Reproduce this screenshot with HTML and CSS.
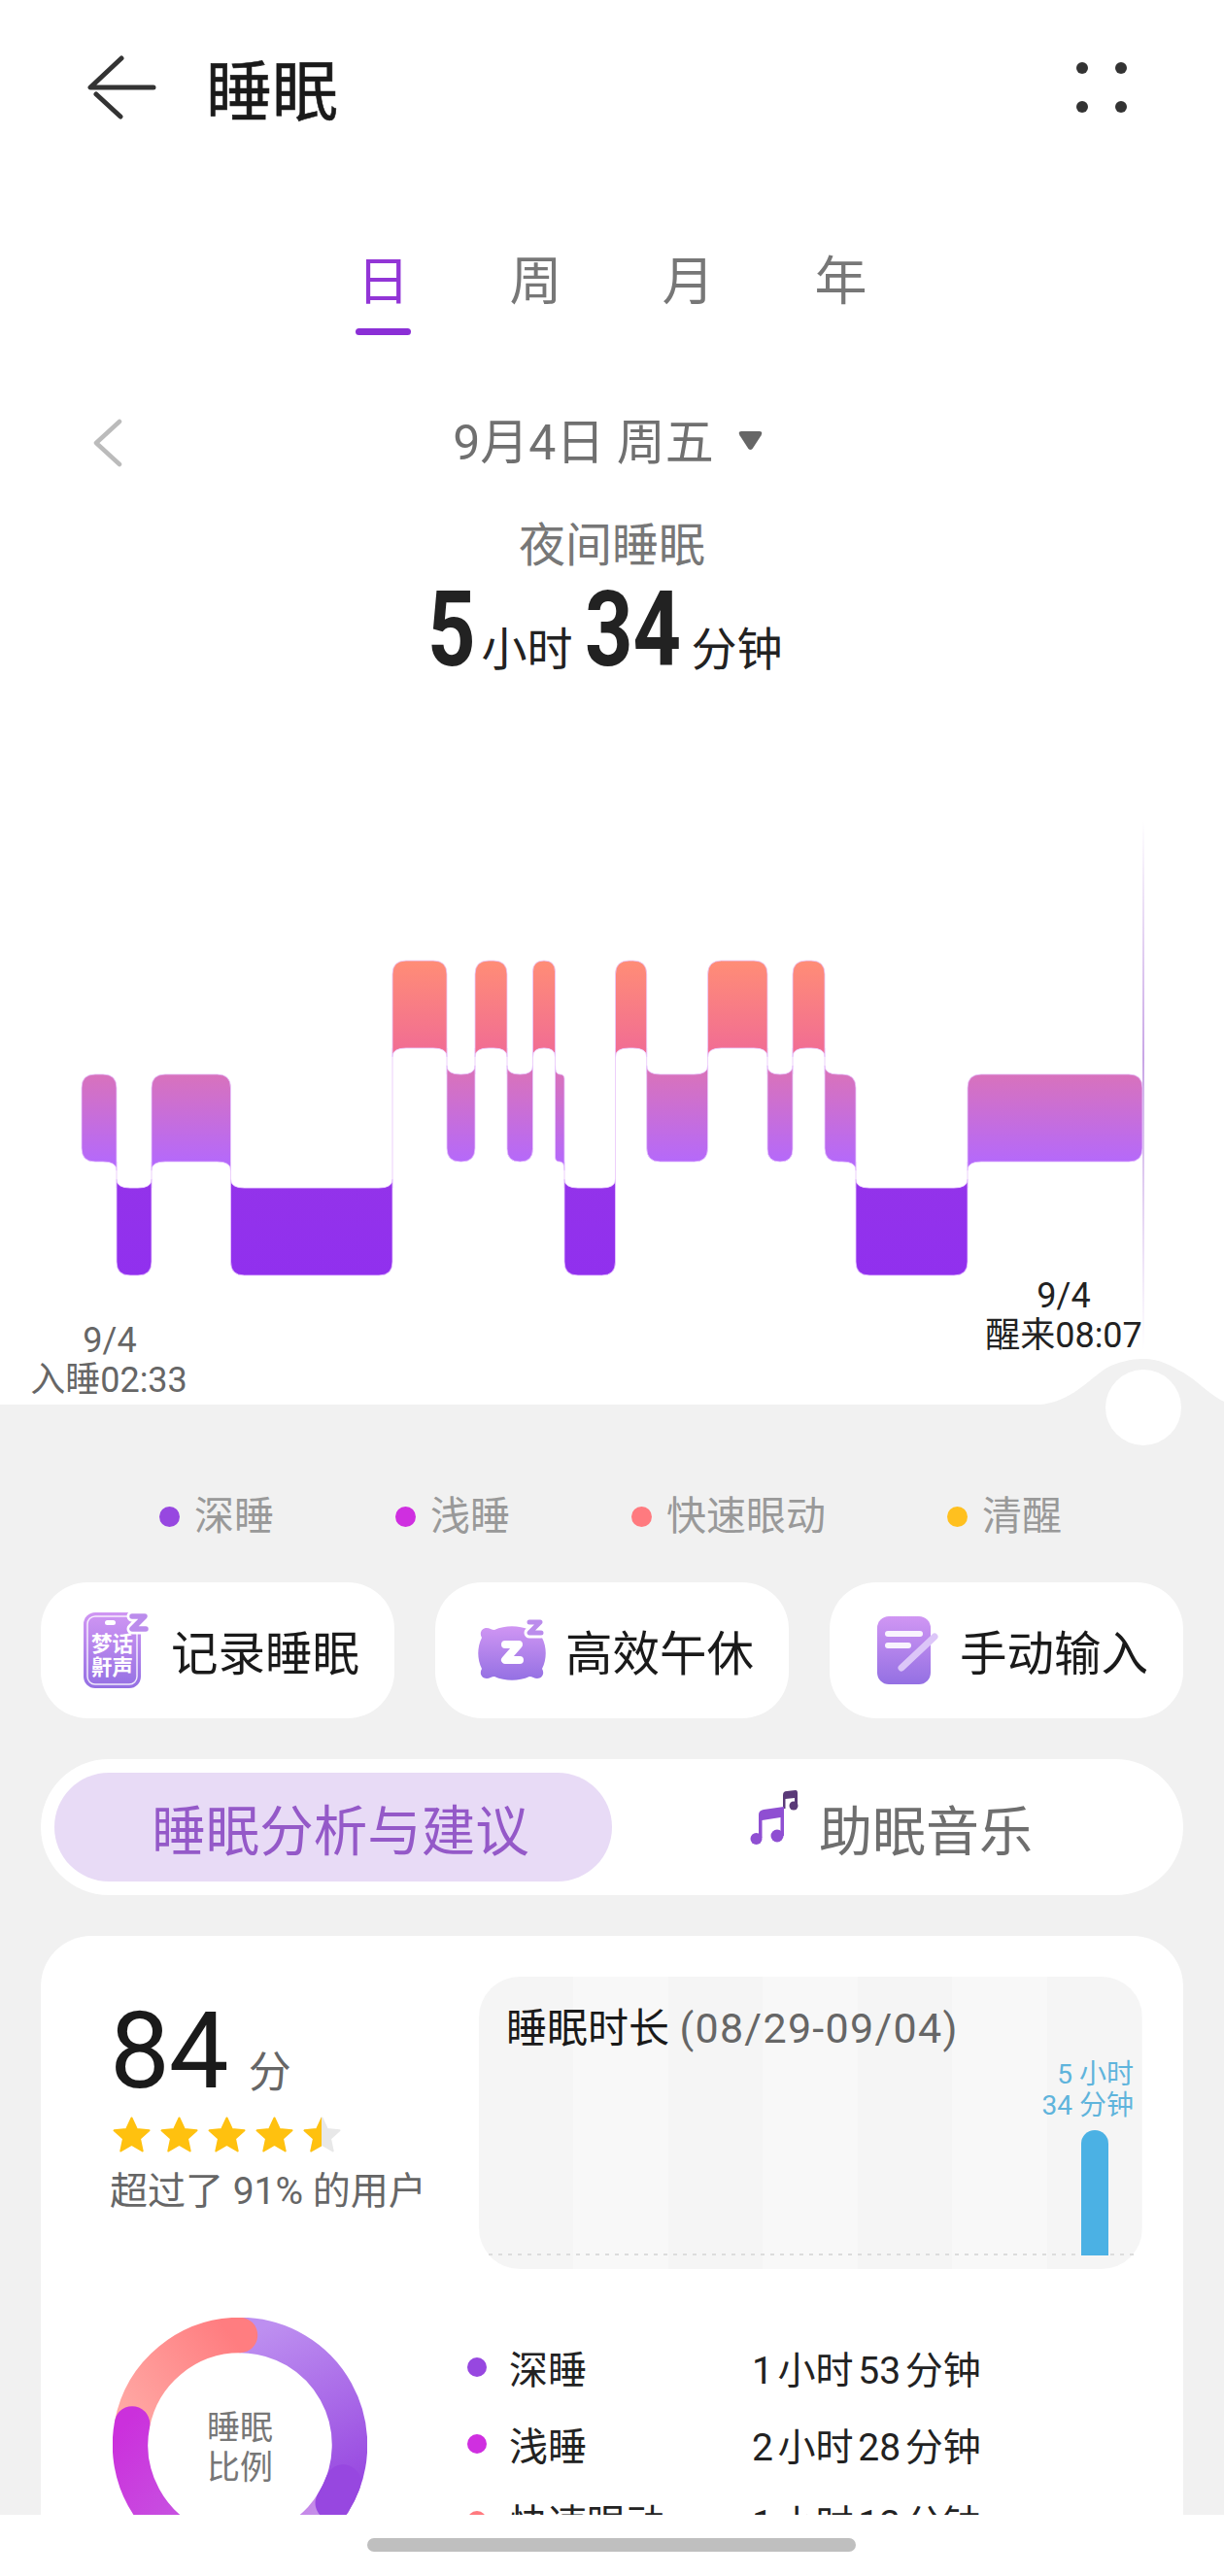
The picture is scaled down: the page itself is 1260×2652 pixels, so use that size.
FILE: index.html
```html
<!DOCTYPE html>
<html lang="zh-CN">
<head>
    <meta charset="utf-8">
    <title>睡眠</title>
    <link rel="stylesheet" href="styles.css">
</head>
<body>

<div id="page">

<section class="summary">
    <div class="topbar">
        <svg class="back-icon" width="72" height="66" viewBox="0 0 72 66">
            <path d="M35 3 L3 33 H68 M9 40 L34 63" fill="none" stroke="#333" stroke-width="5" stroke-linecap="round" stroke-linejoin="round"/>
        </svg>
        <h1 class="page-title">睡眠</h1>
        <svg class="more-icon" width="52" height="52" viewBox="0 0 52 52">
            <circle cx="6" cy="6" r="6" fill="#333"/>
            <circle cx="46" cy="6" r="6" fill="#333"/>
            <circle cx="6" cy="46" r="6" fill="#333"/>
            <circle cx="46" cy="46" r="6" fill="#333"/>
        </svg>
    </div>

    <div class="tabs">
        <div class="tab active">日<i class="tab-line"></i></div>
        <div class="tab">周</div>
        <div class="tab">月</div>
        <div class="tab">年</div>
    </div>

    <div class="date-row">
        <svg class="date-prev" width="32" height="50" viewBox="0 0 32 50">
            <path d="M28 3 L4 25 L28 47" fill="none" stroke="#bbb" stroke-width="4.5" stroke-linecap="round" stroke-linejoin="round"/>
        </svg>
        <div class="date-now">
            <span>9月4日 周五</span>
            <svg class="date-arrow" width="27" height="21" viewBox="0 0 24 20"><path d="M3 1 H21 Q24.500 1 22.500 5 L14 18 Q12 20 10 18 L1.500 5 Q-0.500 1 3 1 Z" fill="#666"/></svg>
        </div>
    </div>

    <div class="night-label">夜间睡眠</div>
    <div class="duration">
        <b class="num-one">5</b><span>小时</span><b class="num-two">34</b><span>分钟</span>
    </div>

    <svg id="chart" class="chart" width="1260" height="666" viewBox="0 780 1260 666">
        <defs>
            <linearGradient id="grad-rem" gradientUnits="userSpaceOnUse" x1="0" y1="989" x2="0" y2="1090">
                <stop offset="0" stop-color="#ff8d76"/>
                <stop offset="1" stop-color="#f06a96"/>
            </linearGradient>
            <linearGradient id="grad-light" gradientUnits="userSpaceOnUse" x1="0" y1="1106" x2="0" y2="1196">
                <stop offset="0" stop-color="#d872bc"/>
                <stop offset="1" stop-color="#b569fa"/>
            </linearGradient>
            <linearGradient id="grad-deep" gradientUnits="userSpaceOnUse" x1="0" y1="1215" x2="0" y2="1313">
                <stop offset="0" stop-color="#9333ea"/>
                <stop offset="1" stop-color="#9130ee"/>
            </linearGradient>
            <linearGradient id="grad-cursor" gradientUnits="userSpaceOnUse" x1="0" y1="844" x2="0" y2="1390">
                <stop offset="0" stop-color="#c9a6e6" stop-opacity="0"/>
                <stop offset="0.45" stop-color="#c9a6e6"/>
                <stop offset="1" stop-color="#c9a6e6" stop-opacity="0"/>
            </linearGradient>
        </defs>
        <rect x="1176" y="844" width="2" height="546" fill="url(#grad-cursor)"/>
        <g id="stages"></g>
        <text class="chart-label" x="113" y="1392" text-anchor="middle">9/4</text>
        <text class="chart-label" x="112" y="1433" text-anchor="middle">入睡02:33</text>
        <text class="chart-label dark" x="1095" y="1346" text-anchor="middle">9/4</text>
        <text class="chart-label dark" x="1095" y="1387" text-anchor="middle">醒来08:07</text>
        <path d="M1060 1447 C1100 1446 1115 1425 1138 1409 C1150 1402 1165 1399 1177 1399 C1195 1399 1205 1406 1218 1413 C1232 1421 1248 1438 1260 1443 V1447 Z" fill="#f1f1f1"/>
        <circle cx="1177" cy="1449" r="39" fill="#fff"/>
    </svg>
</section>

<section class="details">
    <div class="legend">
        <div class="legend-item"><i class="dot deep"></i>深睡</div>
        <div class="legend-item"><i class="dot light"></i>浅睡</div>
        <div class="legend-item"><i class="dot rem"></i>快速眼动</div>
        <div class="legend-item"><i class="dot awake"></i>清醒</div>
    </div>

    <div class="actions">
        <div class="action">
            <svg class="action-icon" width="90" height="90" viewBox="0 0 90 90">
                <defs>
                    <linearGradient id="grad-icon" x1="0" y1="0" x2="0" y2="1">
                        <stop offset="0" stop-color="#d096f3"/>
                        <stop offset="1" stop-color="#9470e3"/>
                    </linearGradient>
                </defs>
                <rect x="0" y="6" width="59" height="78" rx="12" fill="url(#grad-icon)"/>
                <rect x="4" y="10" width="51" height="70" rx="8" fill="none" stroke="#fff" stroke-opacity="0.85" stroke-width="1.500"/>
                <rect x="22" y="14" width="11" height="5" rx="2.500" fill="#fff"/>
                <path d="M50 10 H63 L50 23 H64" fill="none" stroke="#fff" stroke-width="11" stroke-linecap="round" stroke-linejoin="round"/>
                <path d="M50 10 H63 L50 23 H64" fill="none" stroke="#bb8cec" stroke-width="5.500" stroke-linecap="round" stroke-linejoin="round"/>
                <text class="icon-text" x="8" y="46">梦话</text>
                <text class="icon-text" x="8" y="70">鼾声</text>
            </svg>
            记录睡眠
        </div>
        <div class="action">
            <svg class="action-icon" width="90" height="90" viewBox="0 0 90 90">
                <defs>
                    <linearGradient id="grad-pillow" gradientUnits="userSpaceOnUse" x1="0" y1="20" x2="0" y2="76">
                        <stop offset="0" stop-color="#d096f3"/>
                        <stop offset="1" stop-color="#9470e3"/>
                    </linearGradient>
                </defs>
                <path d="M9 22 C12 22 14 24 17 24 C28 19 42 19 53 24 C56 24 58 22 61 22 C66 22 69 27 66 32 C71 42 71 54 66 64 C69 69 66 74 61 74 C58 74 56 72 53 72 C42 77 28 77 17 72 C14 72 12 74 9 74 C4 74 1 69 4 64 C-1 54 -1 42 4 32 C1 27 4 22 9 22 Z" fill="url(#grad-pillow)"/>
                <path d="M28 39 H42 L28 55 H43" fill="none" stroke="#fff" stroke-width="8" stroke-linecap="round" stroke-linejoin="round"/>
                <path d="M53 16 H64 L53 27 H65" fill="none" stroke="#fff" stroke-width="11" stroke-linecap="round" stroke-linejoin="round"/>
                <path d="M53 16 H64 L53 27 H65" fill="none" stroke="#bb8cec" stroke-width="5" stroke-linecap="round" stroke-linejoin="round"/>
            </svg>
            高效午休
        </div>
        <div class="action">
            <svg class="action-icon" width="90" height="90" viewBox="0 0 90 90">
                <rect x="5" y="10" width="55" height="70" rx="12" fill="url(#grad-icon)"/>
                <rect x="13" y="25" width="39" height="6" rx="3" fill="#fff" fill-opacity="0.9"/>
                <rect x="13" y="37" width="27" height="6" rx="3" fill="#fff" fill-opacity="0.9"/>
                <path d="M30 63 L64 31" stroke="#dcc6f8" stroke-width="7" stroke-linecap="round"/>
            </svg>
            手动输入
        </div>
    </div>

    <div class="switcher">
        <div class="switch-item selected">睡眠分析与建议</div>
        <div class="switch-item">
            <svg class="music-icon" width="56" height="72" viewBox="12 8 56 72">
                <path d="M47 32 V18 Q47 14 51 14 L60 13 Q62 13 62 16 V30 H59 V21 L49.500 22 V32 Z" fill="#5a3a78"/>
                <circle cx="58" cy="29" r="4.500" fill="#5a3a78"/>
                <path d="M22 62 V38 Q22 34 27 33 L48 30 V60 H44.500 V41 L25.500 44 V62 Z" fill="#8f4fd2"/>
                <circle cx="19.500" cy="63" r="6" fill="#8f4fd2"/>
                <circle cx="41" cy="60" r="6.500" fill="#8f4fd2"/>
            </svg>
            助眠音乐
        </div>
    </div>

    <div class="card">
        <div class="card-top">
            <div class="score">
                <div class="score-line"><span class="score-num">84</span><span class="score-unit">分</span></div>
                <div class="stars">
                    <svg width="245" height="38" viewBox="0 0 245 38">
                        <defs>
                            <path id="star" d="M19.500 1.500 L24.800 13 L37.500 14.300 L28 22.800 L30.700 35.500 L19.500 29 L8.300 35.500 L11 22.800 L1.500 14.300 L14.200 13 Z" stroke-width="2" stroke-linejoin="round"/>
                            <clipPath id="half-star"><rect x="196" y="0" width="19" height="38"/></clipPath>
                        </defs>
                        <use href="#star" x="0" fill="#ffc10f" stroke="#ffc10f"/>
                        <use href="#star" x="49" fill="#ffc10f" stroke="#ffc10f"/>
                        <use href="#star" x="98" fill="#ffc10f" stroke="#ffc10f"/>
                        <use href="#star" x="147" fill="#ffc10f" stroke="#ffc10f"/>
                        <use href="#star" x="196" fill="#e8e8e8" stroke="#e8e8e8"/>
                        <g clip-path="url(#half-star)"><use href="#star" x="196" fill="#ffc10f" stroke="#ffc10f"/></g>
                    </svg>
                </div>
                <div class="score-note">超过了 91% 的用户</div>
            </div>
            <div class="week-panel">
                <div class="week-title">睡眠时长 <span>(08/29-09/04)</span></div>
                <div class="week-bar-wrap">
                    <div class="week-value">5 小时<br>34 分钟</div>
                    <div class="week-bar"></div>
                </div>
            </div>
        </div>

        <div class="card-bottom">
            <div class="donut">
                <svg width="262" height="262" viewBox="0 0 262 262">
                    <defs>
                        <linearGradient id="grad-d-deep" gradientUnits="userSpaceOnUse" x1="140" y1="18" x2="220" y2="190">
                            <stop offset="0" stop-color="#bd8ff0"/>
                            <stop offset="1" stop-color="#9747e0"/>
                        </linearGradient>
                        <linearGradient id="grad-d-rem" gradientUnits="userSpaceOnUse" x1="130" y1="30" x2="20" y2="110">
                            <stop offset="0" stop-color="#ff7d80"/>
                            <stop offset="1" stop-color="#ffa8a4"/>
                        </linearGradient>
                        <linearGradient id="grad-d-light" gradientUnits="userSpaceOnUse" x1="20" y1="100" x2="190" y2="240">
                            <stop offset="0" stop-color="#cb30dc"/>
                            <stop offset="0.6" stop-color="#c65ae2"/>
                            <stop offset="1" stop-color="#c596ea"/>
                        </linearGradient>
                    </defs>
                    <g fill="none" stroke-width="36.500" stroke-linecap="round">
                        <path d="M131 18 A113 113 0 0 1 226.800 190.900" stroke="url(#grad-d-deep)"/>
                        <path d="M20.100 109.400 A113 113 0 0 1 131 18" stroke="url(#grad-d-rem)"/>
                        <path d="M226.800 190.900 A113 113 0 0 1 20.100 109.400" stroke="url(#grad-d-light)"/>
                        <path d="M237.200 169.600 A113 113 0 0 1 226.800 190.900" stroke="#9747e0"/>
                    </g>
                </svg>
                <div class="donut-label">睡眠<br>比例</div>
            </div>
            <div class="breakdown">
                <div class="breakdown-row"><i class="dot deep"></i><span class="breakdown-name">深睡</span><span class="breakdown-val">1 小时 53 分钟</span></div>
                <div class="breakdown-row"><i class="dot light"></i><span class="breakdown-name">浅睡</span><span class="breakdown-val">2 小时 28 分钟</span></div>
                <div class="breakdown-row"><i class="dot rem"></i><span class="breakdown-name">快速眼动</span><span class="breakdown-val">1 小时 13 分钟</span></div>
            </div>
        </div>
    </div>
</section>

<div class="navbar"><i class="nav-pill"></i></div>

</div>

<script src="chart.js"></script>

</body>
</html>
```

FILE: styles.css
```css
* {
  box-sizing: border-box;
}

body {
  margin: 0;
  padding: 0;
  background-color: #f1f1f1;
  font-family: Roboto, "Noto Sans CJK SC", sans-serif;
  color: #1a1a1a;
}

i {
  display: block;
  font-style: normal;
}

#page {
  position: relative;
  width: 1260px;
  height: 2652px;
  overflow: hidden;
}

.summary {
  height: 1446px;
  background-color: #fff;
}

.topbar {
  display: flex;
  align-items: center;
  height: 186px;
  padding: 0 100px 6px 90px;
}

.page-title {
  margin: 12px 0 0 50px;
  font-size: 68px;
  font-weight: 400;
  line-height: 80px;
  color: #1a1a1a;
  -webkit-text-stroke: 0.6px #1a1a1a;
}

.more-icon {
  margin-left: auto;
}

.tabs {
  display: flex;
  justify-content: center;
  margin-top: 78px;
}

.tab {
  width: 157px;
  height: 81px;
  font-size: 54px;
  line-height: 54px;
  text-align: center;
  color: #777;
}

.tab.active {
  color: #9235d6;
}

.tab-line {
  width: 57px;
  height: 7px;
  margin: 20px auto 0;
  border-radius: 4px;
  background-color: #8b2fd6;
}

.date-row {
  display: grid;
  grid-template-columns: 1fr auto 1fr;
  align-items: center;
  height: 60px;
  margin-top: 81px;
}

.date-prev {
  margin-left: 95px;
}

.date-now {
  display: flex;
  align-items: center;
  gap: 24px;
  margin-right: 8px;
  font-size: 50px;
  line-height: 60px;
  color: #707070;
}

.date-arrow {
  margin-bottom: 6px;
}

.night-label {
  margin-top: 46px;
  font-size: 48px;
  line-height: 60px;
  text-align: center;
  color: #777;
}

.duration {
  display: flex;
  align-items: baseline;
  justify-content: center;
  height: 110px;
  margin-top: 1px;
  padding-right: 15px;
  font-size: 47px;
  line-height: 110px;
  color: #222;
}

.duration b {
  display: inline-block;
  font-size: 108px;
  font-weight: 700;
  transform: scaleX(0.8);
  transform-origin: left;
}

.num-one {
  width: 56px;
}

.num-two {
  width: 110px;
  margin-left: 12px;
}

.chart {
  display: block;
  position: relative;
  z-index: 1;
  overflow: visible;
  margin-top: 77px;
}

.chart-label {
  font-size: 36px;
  fill: #666;
}

.chart-label.dark {
  fill: #222;
}

.details {
  padding: 90px 42px 0;
}

.legend {
  display: flex;
  justify-content: center;
  gap: 125px;
  padding-right: 3px;
  font-size: 41px;
  line-height: 50px;
  color: #999;
}

.legend-item {
  display: flex;
  align-items: center;
  gap: 15px;
}

.dot {
  flex: none;
  width: 21px;
  height: 21px;
  border-radius: 50%;
}

.dot.deep {
  background-color: #9747e0;
}

.dot.light {
  background-color: #cf2fe0;
}

.dot.rem {
  background-color: #ff7a7f;
}

.dot.awake {
  background-color: #ffc01f;
}

.actions {
  display: grid;
  grid-template-columns: repeat(3, 364px);
  gap: 42px;
  margin-top: 43px;
}

.action {
  display: flex;
  align-items: center;
  height: 140px;
  padding-left: 44px;
  border-radius: 48px;
  background-color: #fff;
  font-size: 48.500px;
  color: #1a1a1a;
}

.action-icon {
  flex: none;
}

.icon-text {
  font-size: 21.500px;
  font-weight: 700;
  fill: #fff;
}

.switcher {
  display: flex;
  align-items: center;
  height: 140px;
  margin-top: 42px;
  padding: 0 14px;
  border-radius: 70px;
  background-color: #fff;
}

.switch-item {
  display: flex;
  flex: none;
  align-items: center;
  justify-content: center;
  width: 574px;
  height: 112px;
  border-radius: 56px;
  font-size: 55px;
  color: #6e6e6e;
}

.switch-item.selected {
  padding-left: 15px;
  background-color: #e8dbf6;
  font-size: 55.500px;
  color: #9459c8;
}

.music-icon {
  margin: -14px 16px 0 0;
}

.card {
  height: 700px;
  margin-top: 42px;
  padding-top: 42px;
  border-radius: 52px 52px 0 0;
  background-color: #fff;
}

.card-top {
  display: flex;
  height: 301px;
}

.score {
  width: 451px;
  padding-left: 71px;
}

.score-line {
  display: flex;
  align-items: baseline;
  height: 138px;
  line-height: 153px;
}

.score-num {
  font-size: 110px;
  letter-spacing: -1px;
}

.score-unit {
  margin-left: 21px;
  font-size: 44px;
  color: #666;
}

.stars {
  margin: 6px 0 0 3px;
  line-height: 0;
}

.score-note {
  margin: 14px 0 0 0;
  font-size: 39px;
  line-height: 50px;
  color: #666;
}

.week-panel {
  display: flex;
  flex-direction: column;
  width: 683px;
  height: 301px;
  padding: 30px 0 0 28px;
  border-radius: 42px;
  background: repeating-linear-gradient(90deg, #f5f5f5 0 97px, #f8f8f8 97px 195px);
}

.week-title {
  height: 46px;
  font-size: 42px;
  line-height: 46px;
  color: #1a1a1a;
}

.week-title span {
  font-size: 43px;
  letter-spacing: 1.300px;
  color: #666;
}

.week-bar-wrap {
  display: flex;
  flex: 1;
  flex-direction: column;
  align-items: flex-end;
  justify-content: flex-end;
  margin: 0 9px 14px -18px;
  background: repeating-linear-gradient(90deg, #dcdcdc 0 4px, transparent 4px 10px) bottom / 100% 2px no-repeat;
}

.week-value {
  margin-bottom: 9px;
  font-size: 28px;
  line-height: 32px;
  text-align: right;
  color: #5fb4dc;
}

.week-bar {
  width: 28px;
  height: 129px;
  margin: 0 26px 0 0;
  border-radius: 14px 14px 0 0;
  background-color: #4bb1e4;
}

.card-bottom {
  display: flex;
  margin-top: 50px;
  padding-left: 74px;
}

.donut {
  display: grid;
  flex: none;
  width: 262px;
  height: 262px;
  margin-right: 103px;
}

.donut svg,
.donut-label {
  grid-area: 1 / 1;
}

.donut-label {
  align-self: center;
  padding-top: 5px;
  font-size: 34px;
  line-height: 41px;
  text-align: center;
  color: #777;
}

.breakdown {
  margin-top: 11px;
}

.breakdown-row {
  display: flex;
  align-items: center;
  height: 79px;
  font-size: 39px;
  color: #222;
}

.breakdown-row .dot {
  width: 20px;
  height: 20px;
  margin-right: 23px;
}

.breakdown-name {
  width: 250px;
  font-size: 40px;
}

.breakdown-val {
  word-spacing: -5px;
}

.navbar {
  position: absolute;
  left: 0;
  right: 0;
  bottom: 0;
  z-index: 2;
  height: 63px;
  padding: 24px 0 0 378px;
  background-color: #fff;
}

.nav-pill {
  width: 503px;
  height: 14px;
  border-radius: 7px;
  background-color: #bfbfbf;
}
```

FILE: chart.js
```js
// sleep stages, left edge / right edge / stage (0 rem, 1 light, 2 deep)
var stages = [
    [84, 120, 1], [120, 156, 2], [156, 237.5, 1], [237.5, 404, 2],
    [404, 460, 0], [460, 489, 1], [489, 522, 0], [522, 548.5, 1],
    [548.5, 571.5, 0], [571.5, 581, 1], [581, 633.5, 2], [633.5, 665.7, 0],
    [665.7, 728.6, 1], [728.6, 790, 0], [790, 816, 1], [816, 849, 0],
    [849, 881, 1], [881, 996, 2], [996, 1176, 1]
];
var bands = [[989, 1079], [1106, 1196], [1223, 1313]];
var fills = ['url(#grad-rem)', 'url(#grad-light)', 'url(#grad-deep)'];
var FLARE = 9;
var SVG_NS = 'http://www.w3.org/2000/svg';

function stagePath(i) {
    var s = stages[i];
    var x0 = s[0], x1 = s[1], level = s[2];
    var top = bands[level][0], bottom = bands[level][1];
    var r = Math.min(14, (x1 - x0) / 2);
    var left = i > 0 ? stages[i - 1][2] : level;
    var right = i < stages.length - 1 ? stages[i + 1][2] : level;

    var d = 'M' + x0 + ' ' + (left < level ? top - FLARE : top + r);
    d += ' Q' + x0 + ' ' + top + ' ' + (x0 + r) + ' ' + top;
    d += ' L' + (x1 - r) + ' ' + top;
    d += ' Q' + x1 + ' ' + top + ' ' + x1 + ' ' + (right < level ? top - FLARE : top + r);
    d += ' L' + x1 + ' ' + (right > level ? bottom + FLARE : bottom - r);
    d += ' Q' + x1 + ' ' + bottom + ' ' + (x1 - r) + ' ' + bottom;
    d += ' L' + (x0 + r) + ' ' + bottom;
    d += ' Q' + x0 + ' ' + bottom + ' ' + x0 + ' ' + (left > level ? bottom + FLARE : bottom - r);
    return d + ' Z';
}

var group = document.getElementById('stages');

// thin line that joins two neighbouring stages
stages.forEach(function (s, i) {
    if (i === 0) return;
    var upper = Math.min(stages[i - 1][2], s[2]);
    var lower = Math.max(stages[i - 1][2], s[2]);
    var line = document.createElementNS(SVG_NS, 'line');
    line.setAttribute('x1', s[0]);
    line.setAttribute('x2', s[0]);
    line.setAttribute('y1', bands[upper][1]);
    line.setAttribute('y2', bands[lower][0]);
    line.setAttribute('stroke', '#edd0fb');
    line.setAttribute('stroke-width', '1');
    group.appendChild(line);
});

stages.forEach(function (s, i) {
    var path = document.createElementNS(SVG_NS, 'path');
    path.setAttribute('d', stagePath(i));
    path.setAttribute('fill', fills[s[2]]);
    path.setAttribute('stroke', '#e9c8ff');
    path.setAttribute('stroke-width', '0.8');
    group.appendChild(path);
});
```
